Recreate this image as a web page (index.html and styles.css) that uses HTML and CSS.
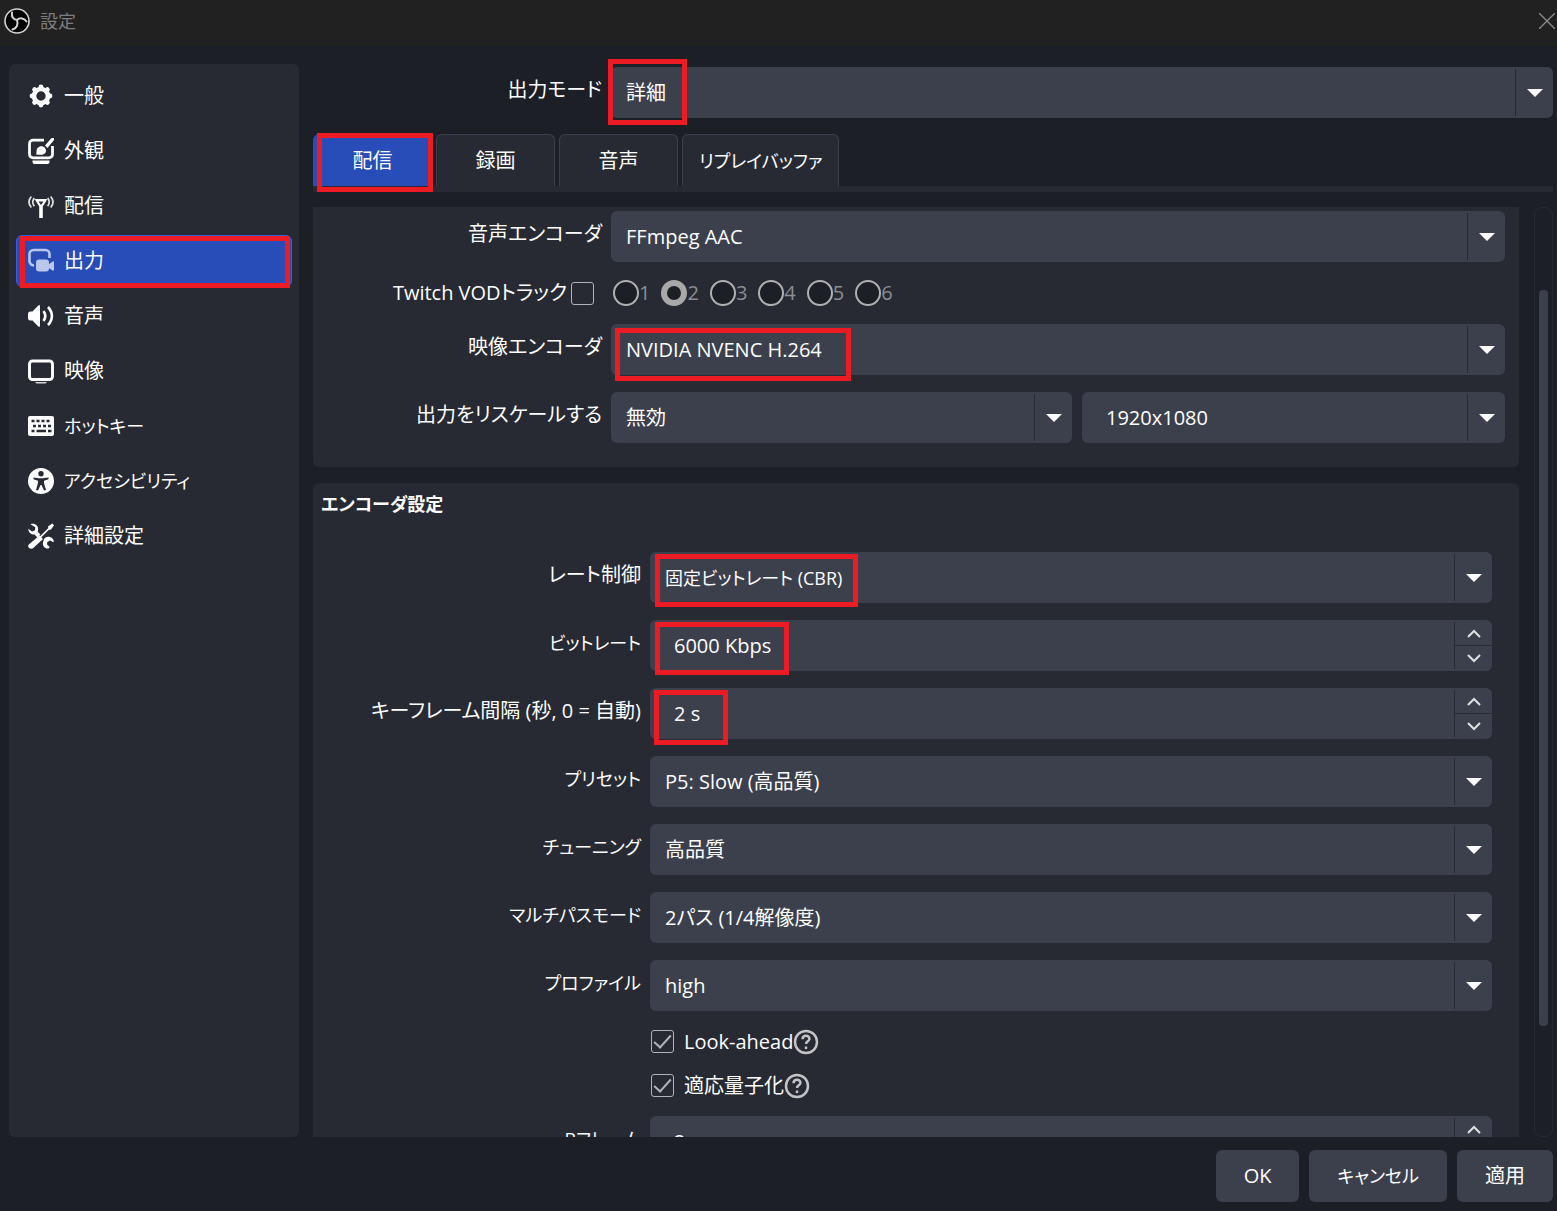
FILE: index.html
```html
<!DOCTYPE html>
<html lang="ja">
<head>
<meta charset="UTF-8">
<meta name="viewport" content="width=device-width, initial-scale=1.0">
<title>設定</title>
<link rel="stylesheet" href="styles.css">
</head>
<body>
<header class="titlebar">
  <svg class="logo" viewBox="0 0 26 26" aria-hidden="true">
    <circle cx="13" cy="13" r="12" fill="#000" stroke="#d4d4d4" stroke-width="1.6"/>
    <g fill="none" stroke="#d4d4d4" stroke-width="2" stroke-linecap="round">
      <path d="M8 4.500c-.6 4 1 6.800 5 7.500"/>
      <path d="M22.500 13.500c-2.500-3.600-6.500-4.200-9.500-1.500"/>
      <path d="M8.500 21.500c4.300-1.200 6-5 4.500-9.500"/>
    </g>
  </svg>
  <h1>設定</h1>
  <button class="close" type="button" aria-label="閉じる">
    <svg viewBox="0 0 16 16"><path d="M0 0l16 16M16 0L0 16" stroke="#8d8d8d" stroke-width="1.300" fill="none"/></svg>
  </button>
</header>

<div class="window">
  <nav class="sidebar">
    <a href="#general">
      <svg viewBox="0 0 26 26"><circle cx="13" cy="13" r="7" fill="none" stroke="#fefefe" stroke-width="4.600"/><g stroke="#fefefe" stroke-width="4.800" stroke-linecap="round"><path d="M13 4v.5M13 21.500v.5M4 13h.5M21.500 13h.5M6.600 6.600l.4.400M19 19l.4.400M6.600 19.400l.4-.4M19 7l.4-.4"/></g></svg>
      一般</a>
    <a href="#appearance">
      <svg viewBox="0 0 26 26"><path d="M16 2.200H5A3.500 3.500 0 0 0 1.500 5.700v10.600A3.500 3.500 0 0 0 5 19.800h16a3.500 3.500 0 0 0 3.500-3.500V8" fill="none" stroke="#fefefe" stroke-width="2.800"/><path d="M4.500 22.500h17V24q0 2-2 2h-13q-2 0-2-2z" fill="#fefefe"/><path d="M8 16.500c1-1.500-.2-4.300 1.600-6.500 2-2.400 5.400-2.400 7.200-.3 2 2.300 1.400 5.200-.8 6.300-2.200 1.200-5 .8-8 .5z" fill="#fefefe"/><path d="M17 7.500L23.500 0H26v2l-6.500 8z" fill="#fefefe"/></svg>
      外観</a>
    <a href="#stream">
      <svg viewBox="0 0 26 26"><path d="M6.500 6h13l-4.700 7.500V25h-3.600V13.500zM10.500 8.500l2.500 3.500 2.500-3.500z" fill="#fefefe" fill-rule="evenodd"/><path d="M3.300 3.500c-3 3.500-3 7.500 0 11M6.300 5c-2 2.600-2 5.500 0 8.200M22.700 3.500c3 3.500 3 7.500 0 11M19.700 5c2 2.600 2 5.500 0 8.200" fill="none" stroke="#e4e4e4" stroke-width="1.700"/></svg>
      配信</a>
    <a href="#output" class="active">
      <svg viewBox="0 0 26 26"><g fill="#bac6ea"><path d="M6 17.300A4 4 0 0 1 1.500 13.300V6A4 4 0 0 1 5.500 2h12a4 4 0 0 1 4 4v4" fill="none" stroke="#bac6ea" stroke-width="2.600"/><rect x="8" y="11.500" width="13" height="12" rx="3"/><path d="M20 17l4.500-3.500H26v9h-1.500L20 19.500z"/></g></svg>
      出力
      <span class="mark"></span></a>
    <a href="#audio">
      <svg viewBox="0 0 26 26"><path d="M0 11q0-2.500 2.500-2.500h2L10 2.700Q12 1 12 3.500v19q0 2.500-2 .8L4.500 17.500h-2Q0 17.500 0 15z" fill="#fefefe"/><path d="M15.500 8c2.300 3.200 2.300 6.800 0 10M20 4c5.200 5.500 5.200 12.500 0 18" fill="none" stroke="#fefefe" stroke-width="2.600"/></svg>
      音声</a>
    <a href="#video">
      <svg viewBox="0 0 26 26"><rect x="1.500" y="3" width="23" height="18.500" rx="3" fill="none" stroke="#fefefe" stroke-width="2.900"/><path d="M7 24h12l-1.500 1.600h-9z" fill="#d8d8d8"/></svg>
      映像</a>
    <a href="#hotkeys" class="kana">
      <svg viewBox="0 0 26 26"><rect y="3" width="26" height="20" rx="2" fill="#fefefe"/><path d="M3.500 8h3M8.500 8h3M13.500 8h3M18.500 8h3M5 13h3M10 13h3M15 13h3M20 13h3M3.500 18h3M8.500 18h9.500M20 18h3.500" stroke="#272a33" stroke-width="2.600" fill="none"/></svg>
      ホットキー</a>
    <a href="#accessibility" class="kana">
      <svg viewBox="0 0 26 26"><circle cx="13" cy="13" r="13" fill="#fefefe"/><g fill="#272a33"><circle cx="13" cy="5.800" r="2.700"/><path d="M5.500 9.500L11 10.300h4l5.500-.8v1.800L16 12.700V15l2 7-2 .5L13.500 17h-1L10 22.500 8 22l2-7v-2.300l-4.500-1.400z"/></g></svg>
      アクセシビリティ</a>
    <a href="#advanced">
      <svg viewBox="0 0 26 26"><g fill="#fefefe"><path d="M2.500 1.200C7 -.5 11 3 10 7.500l-.3 1.200 2.800 2.800-3 3-3-3C3.500 12 .3 9.500.3 5.800l3.700 2.700 3-1.200.3-3z"/><path d="M15.500 17.500c.5-2.800 3.500-4.500 6.500-3.500 2.500.8 4 3 3.700 5.300l-3.700-1.800-2.700 1.500-.3 2.500 2.700 2.500-1.200 1.500c-3.500.5-6.300-2.500-5.500-6z"/><path d="M11.500 12.500l3.500 3.500L5 25.200Q3 26.500 1.200 25T.8 21.500z"/><path d="M20 3.500L24.300.5 26 2.300 23 6.500 20.800 7z"/></g><path d="M11 15.500L22 4.500" stroke="#fefefe" stroke-width="1.700"/></svg>
      詳細設定</a>
  </nav>

  <main class="content">
    <div class="form mode">
      <label for="mode">出力モード</label>
      <div class="combo">
        <select id="mode"><option>詳細</option></select>
        <span class="mark mark-mode"></span>
      </div>
    </div>

    <div class="tabs" role="tablist">
      <button type="button" role="tab" aria-selected="true" class="tab selected">配信<span class="mark"></span></button>
      <button type="button" role="tab" class="tab">録画</button>
      <button type="button" role="tab" class="tab">音声</button>
      <button type="button" role="tab" class="tab kana">リプレイバッファ</button>
    </div>

    <div class="scroll">
      <div class="panels">
        <section class="panel form stream">
          <label for="aenc">音声エンコーダ</label>
          <div class="combo"><select id="aenc"><option>FFmpeg AAC</option></select></div>

          <div class="vod"><label for="vod">Twitch VODトラック</label><input type="checkbox" id="vod"></div>
          <div class="tracks">
            <label><input type="radio" name="track" disabled>1</label>
            <label><input type="radio" name="track" disabled checked>2</label>
            <label><input type="radio" name="track" disabled>3</label>
            <label><input type="radio" name="track" disabled>4</label>
            <label><input type="radio" name="track" disabled>5</label>
            <label><input type="radio" name="track" disabled>6</label>
          </div>

          <label for="venc">映像エンコーダ</label>
          <div class="combo">
            <select id="venc"><option>NVIDIA NVENC H.264</option></select>
            <span class="mark mark-venc"></span>
          </div>

          <label for="rescale">出力をリスケールする</label>
          <div class="pair">
            <div class="combo"><select id="rescale"><option>無効</option></select></div>
            <div class="combo editable"><select aria-label="解像度"><option>1920x1080</option></select></div>
          </div>
        </section>

        <section class="panel encoder">
          <h2 class="kana">エンコーダ設定</h2>
          <div class="form">
            <label for="rate">レート制御</label>
            <div class="combo kana">
              <select id="rate"><option>固定ビットレート (CBR)</option></select>
              <span class="mark mark-rate"></span>
            </div>

            <label for="bitrate" class="kana">ビットレート</label>
            <div class="spin">
              <input type="text" id="bitrate" value="6000 Kbps">
              <div class="steps">
                <button type="button" aria-label="増やす"><svg viewBox="0 0 16 10"><path d="M2 8l6-6 6 6"/></svg></button>
                <button type="button" aria-label="減らす"><svg viewBox="0 0 16 10"><path d="M2 2l6 6 6-6"/></svg></button>
              </div>
              <span class="mark mark-bitrate"></span>
            </div>

            <label for="keyint">キーフレーム間隔 (秒, 0 = 自動)</label>
            <div class="spin">
              <input type="text" id="keyint" value="2 s">
              <div class="steps">
                <button type="button" aria-label="増やす"><svg viewBox="0 0 16 10"><path d="M2 8l6-6 6 6"/></svg></button>
                <button type="button" aria-label="減らす"><svg viewBox="0 0 16 10"><path d="M2 2l6 6 6-6"/></svg></button>
              </div>
              <span class="mark mark-keyint"></span>
            </div>

            <label for="preset" class="kana">プリセット</label>
            <div class="combo"><select id="preset"><option>P5: Slow (高品質)</option></select></div>

            <label for="tuning" class="kana">チューニング</label>
            <div class="combo"><select id="tuning"><option>高品質</option></select></div>

            <label for="multipass" class="kana">マルチパスモード</label>
            <div class="combo"><select id="multipass"><option>2パス (1/4解像度)</option></select></div>

            <label for="profile" class="kana">プロファイル</label>
            <div class="combo"><select id="profile"><option>high</option></select></div>

            <div class="check">
              <input type="checkbox" id="look" checked><label for="look">Look-ahead</label>
              <svg viewBox="0 0 26 26"><circle cx="13" cy="13" r="11"/><path d="M9.500 10.200c.2-4.700 7.400-4.200 6.900-.1-.3 2.400-3.400 2.200-3.400 5"/><path d="M13 17.500v2.600"/></svg>
            </div>
            <div class="check">
              <input type="checkbox" id="aq" checked><label for="aq">適応量子化</label>
              <svg viewBox="0 0 26 26"><circle cx="13" cy="13" r="11"/><path d="M9.500 10.200c.2-4.700 7.400-4.200 6.900-.1-.3 2.400-3.400 2.200-3.400 5"/><path d="M13 17.500v2.600"/></svg>
            </div>

            <label for="bframes" class="kana">Bフレーム</label>
            <div class="spin">
              <input type="text" id="bframes" value="2">
              <div class="steps">
                <button type="button" aria-label="増やす"><svg viewBox="0 0 16 10"><path d="M2 8l6-6 6 6"/></svg></button>
                <button type="button" aria-label="減らす"><svg viewBox="0 0 16 10"><path d="M2 2l6 6 6-6"/></svg></button>
              </div>
            </div>
          </div>
        </section>
      </div>
      <div class="scrollbar"><div class="thumb"></div></div>
    </div>
  </main>
</div>

<footer class="buttons">
  <button type="button">OK</button>
  <button type="button" class="kana">キャンセル</button>
  <button type="button">適用</button>
</footer>
</body>
</html>
```
FILE: styles.css
```css
* {
  box-sizing: border-box;
}
body {
  margin: 0;
  height: 100vh;
  display: flex;
  flex-direction: column;
  overflow: hidden;
  background-color: #1d1f26;
  color: #fefefe;
  font-family: "Open Sans", "Noto Sans CJK JP", sans-serif;
  font-size: 20px;
  line-height: 28px;
  font-feature-settings: "palt";
}
button, input, select {
  font: inherit;
  font-feature-settings: inherit;
  color: inherit;
  margin: 0;
}
button {
  border: none;
  padding: 0;
  background: none;
}

/* title bar */
.titlebar {
  display: flex;
  align-items: center;
  height: 46px;
  padding: 0 2px 4px 4px;
  background-color: #212121;
  flex-shrink: 0;
}
.logo {
  width: 26px;
  height: 26px;
}
.titlebar h1 {
  margin: 0 auto 0 10px;
  font-size: 18px;
  font-weight: normal;
  color: #7d7d7d;
}
.close {
  display: flex;
}
.close svg {
  width: 16px;
  height: 16px;
}

.window {
  flex: 1;
  min-height: 0;
  display: flex;
  gap: 14px;
  padding: 18px 4px 0 9px;
}

/* categories */
.sidebar {
  width: 290px;
  flex-shrink: 0;
  display: flex;
  flex-direction: column;
  gap: 3px;
  padding: 6px 7px;
  border-radius: 6px;
  background-color: #272a33;
}
.sidebar a {
  position: relative;
  display: flex;
  align-items: center;
  gap: 10px;
  height: 52px;
  padding-left: 12px;
  border-radius: 6px;
  color: #fefefe;
  text-decoration: none;
}
.sidebar svg {
  width: 26px;
  height: 26px;
}
.sidebar .active {
  background-color: #284cb8;
  border: 1px solid #3560dd;
  padding-left: 11px;
}

.sidebar .kana, .tab.kana, .encoder .kana, .buttons .kana {
  font-size: 18px;
}

/* red frames round the important settings */
.mark {
  position: absolute;
  border: 5px solid #ed1c24;
  pointer-events: none;
}
.sidebar .mark {
  inset: 0 1px -2px 3px;
}
.tab .mark {
  inset: -2px -2px -6px 3px;
}
.mark-mode {
  left: -3px;
  top: -8px;
  width: 79px;
  height: 66px;
}
.mark-venc {
  left: 4px;
  top: 4px;
  width: 236px;
  height: 53px;
}
.mark-rate {
  left: 5px;
  top: 2px;
  width: 203px;
  height: 53px;
}
.mark-bitrate {
  left: 5px;
  top: 2px;
  width: 134px;
  height: 53px;
}
.mark-keyint {
  left: 4px;
  top: 2px;
  width: 74px;
  height: 55px;
}

/* forms */
.content {
  flex: 1;
  min-width: 0;
  display: flex;
  flex-direction: column;
}
.form {
  display: grid;
  grid-template-columns: 289px 1fr;
  column-gap: 9px;
  row-gap: 17px;
}
.form > label {
  text-align: right;
  padding-top: 9px;
}
.mode {
  padding-top: 3px;
}
.combo, .spin {
  position: relative;
  height: 51px;
  border-radius: 6px;
  background-color: #3c404d;
}
.combo select {
  width: 100%;
  height: 100%;
  padding: 1px 40px 0 15px;
  border: none;
  background: none;
  appearance: none;
}
.combo.editable select {
  padding-left: 24px;
}
.combo::before {
  content: "";
  position: absolute;
  top: 2px;
  bottom: 2px;
  right: 37px;
  border-left: 1px solid #272a33;
}
.combo::after {
  content: "";
  position: absolute;
  top: 22px;
  right: 10px;
  border: 8px solid transparent;
  border-top-color: #fefefe;
  border-bottom: none;
}
.spin {
  display: flex;
}
.spin input {
  flex: 1;
  min-width: 0;
  padding: 1px 0 0 24px;
  border: none;
  background: none;
}
.steps {
  width: 38px;
  margin: 2px 0;
  display: flex;
  flex-direction: column;
  border-left: 1px solid #272a33;
}
.steps button {
  flex: 1;
  display: flex;
  align-items: center;
  justify-content: center;
}
.steps button + button {
  border-top: 1px solid #272a33;
}
.steps svg {
  width: 16px;
  height: 10px;
  fill: none;
  stroke: #e0e0e0;
  stroke-width: 2;
}

/* tabs */
.tabs {
  display: flex;
  gap: 4px;
  margin-top: 16px;
  border-bottom: 6px solid #272a33;
}
.tab {
  position: relative;
  height: 52px;
  min-width: 119px;
  padding: 0 16px;
  border: 1px solid #3c404d;
  border-bottom: none;
  border-radius: 6px 6px 0 0;
  background-color: #272a33;
}
.tab.selected {
  background-color: #284cb8;
  border-color: #284cb8;
}

/* scrolled area */
.scroll {
  flex: 1;
  min-height: 0;
  display: flex;
  justify-content: space-between;
  gap: 15px;
  margin-top: 15px;
  overflow: hidden;
}
.panels {
  flex: 1;
}
.panel {
  border-radius: 6px;
  background-color: #272a33;
}
.stream {
  padding: 4px 14px 24px 0;
  border-radius: 0 0 6px 6px;
}
.encoder {
  margin-top: 16px;
  padding: 6px 27px 24px 0;
}
.encoder h2 {
  margin: 0 0 33px 8px;
  line-height: 30px;
  font-weight: 600;
}
.encoder .form {
  grid-template-columns: 328px 1fr;
}
.pair {
  display: grid;
  grid-template-columns: 461fr 423fr;
  gap: 10px;
}
.vod {
  display: flex;
  align-items: center;
  justify-content: flex-end;
  gap: 4px;
  padding-right: 8px;
}
.tracks {
  display: flex;
  gap: 11px;
  padding-left: 2px;
  color: #8c8d91;
}
.tracks label {
  display: flex;
  align-items: center;
}
input[type="radio"] {
  appearance: none;
  width: 26px;
  height: 26px;
  border: 2px solid #b0b0b0;
  border-radius: 50%;
  background-color: #1d1f26;
}
input[type="radio"]:checked {
  border-width: 6px;
  border-color: #a8a8a8;
}
input[type="checkbox"] {
  appearance: none;
  width: 23px;
  height: 23px;
  border: 1px solid #b4b4b8;
  border-radius: 3px;
  display: grid;
  place-items: center;
}
input[type="checkbox"]:checked::before {
  content: "";
  width: 15px;
  height: 7px;
  border: solid #b4b4b8;
  border-width: 0 0 2px 2px;
  transform: translateY(-2px) rotate(-48deg);
}
.check {
  grid-column: 2;
  display: flex;
  align-items: center;
  height: 27px;
  padding-left: 1px;
}
.check label {
  margin-left: 10px;
}
.check svg {
  width: 26px;
  height: 26px;
  fill: none;
  stroke: #c4c4c6;
  stroke-width: 2.5;
}
.scrollbar {
  width: 19px;
  padding: 82px 4px 0;
  border: 1px solid #272a33;
  border-radius: 8px;
}
.thumb {
  height: 87%;
  border-radius: 4px;
  background-color: #3c404d;
}

/* dialog buttons */
.buttons {
  display: flex;
  justify-content: flex-end;
  gap: 10px;
  padding: 13px 4px 9px;
  flex-shrink: 0;
}
.buttons button {
  height: 52px;
  padding: 0 28px;
  border-radius: 6px;
  background-color: #3c404d;
}
```
